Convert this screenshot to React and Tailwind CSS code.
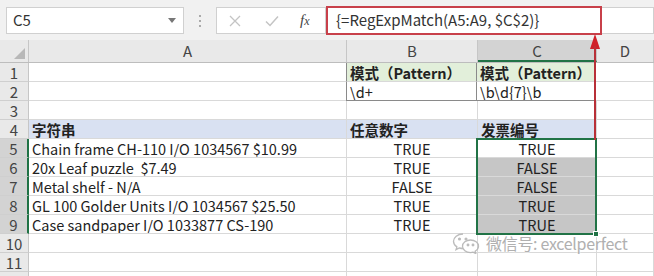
import React from 'react'

const COLS = [
  { key: 'a', label: 'A', w: 'w-[318px]' },
  { key: 'b', label: 'B', w: 'w-[131px]' },
  { key: 'c', label: 'C', w: 'w-[119px]' },
  { key: 'd', label: 'D', w: 'flex-1' },
]

const ROWS = [
  { n: 1, b: '模式（Pattern）', c: '模式（Pattern）', bg: 'bg-[#e2efda]', bold: true, boxed: true },
  { n: 2, b: '\\d+', c: '\\b\\d{7}\\b', boxed: true, bottom: true },
  { n: 3 },
  { n: 4, a: '字符串', b: '任意数字', c: '发票编号', bg: 'bg-[#d9e1f2]', bold: true },
  { n: 5, a: 'Chain frame CH-110 I/O 1034567 $10.99', b: 'TRUE', c: 'TRUE', sel: true, active: true },
  { n: 6, a: '20x Leaf puzzle  $7.49', b: 'TRUE', c: 'FALSE', sel: true },
  { n: 7, a: 'Metal shelf - N/A', b: 'FALSE', c: 'FALSE', sel: true },
  { n: 8, a: 'GL 100 Golder Units I/O 1034567 $25.50', b: 'TRUE', c: 'TRUE', sel: true },
  { n: 9, a: 'Case sandpaper I/O 1033877 CS-190', b: 'TRUE', c: 'TRUE', sel: true },
  { n: 10 },
  { n: 11 },
  { n: '' },
]

function Cell({ col, row }) {
  const text = row[col.key]
  const center = row.sel && (col.key === 'b' || col.key === 'c')
  let bg = 'bg-white'
  if (row.bg && col.key !== 'd' && !(row.n === 1 && col.key === 'a')) bg = row.bg
  if (row.sel && col.key === 'c' && !row.active) bg = 'bg-[#c6c6c6]'
  const boxed = row.boxed && (col.key === 'b' || col.key === 'c')
  return (
    <div
      className={`${col.w} h-[19px] shrink-0 border-r border-b ${
        boxed ? 'border-r-[#8a8a8a]' : 'border-r-[#d9d9d9]'
      } ${boxed && row.bottom ? 'border-b-[#8a8a8a]' : 'border-b-[#d9d9d9]'} ${
        boxed && col.key === 'b' ? 'border-l border-l-[#8a8a8a] -ml-px' : ''
      } ${bg} ${center ? 'text-center' : 'pl-[3px]'} ${
        row.bold ? 'font-bold' : ''
      } overflow-hidden whitespace-pre text-[14.5px] leading-[19px] text-[#222]`}
    >
      {text}
    </div>
  )
}

function WeChatIcon() {
  return (
    <svg width="28" height="22" viewBox="0 0 28 22" fill="none" stroke="#b5b5b5" strokeWidth="1.3">
      <path d="M11 2C5.5 2 1.5 5.3 1.5 9.3c0 2.3 1.3 4.3 3.4 5.6l-.9 2.8 3.3-1.7c1.2.3 2.4.5 3.7.5" />
      <path d="M18.5 8c-4.4 0-8 2.8-8 6.3s3.6 6.3 8 6.3c.9 0 1.8-.1 2.6-.4l2.7 1.4-.7-2.4c2-1.2 3.4-3 3.4-4.9 0-3.5-3.6-6.3-8-6.3z" />
      <circle cx="7.5" cy="7" r="0.9" fill="#b5b5b5" />
      <circle cx="14" cy="7" r="0.9" fill="#b5b5b5" />
      <circle cx="16" cy="13" r="0.8" fill="#b5b5b5" />
      <circle cx="21" cy="13" r="0.8" fill="#b5b5b5" />
    </svg>
  )
}

export default function App() {
  return (
    <div className="relative w-[654px] h-[276px] overflow-hidden bg-white font-['Noto_Sans_CJK_SC',sans-serif]">
      {/* formula bar */}
      <div className="flex h-[40px] items-start bg-[#f1f1f1] pt-[7px]">
        <div className="ml-[6px] flex h-[27px] w-[178px] items-center justify-between border border-[#d0d0d0] bg-white pl-[6px] pr-[7px]">
          <span className="text-[15px] text-[#333]">C5</span>
          <svg width="8" height="5" viewBox="0 0 8 5">
            <path d="M0 0h8L4 5z" fill="#777" />
          </svg>
        </div>
        <div className="flex h-[27px] w-[32px] flex-col items-center justify-center gap-[3px]">
          <span className="h-[2px] w-[2px] bg-[#aaa]" />
          <span className="h-[2px] w-[2px] bg-[#aaa]" />
          <span className="h-[2px] w-[2px] bg-[#aaa]" />
        </div>
        <div className="flex h-[27px] w-[110px] items-center border border-[#d0d0d0] bg-white">
          <svg className="ml-[12px]" width="12" height="12" viewBox="0 0 12 12" stroke="#c4c4c4" strokeWidth="1.3">
            <path d="M1 1l10 10M11 1L1 11" />
          </svg>
          <svg className="ml-[24px]" width="14" height="12" viewBox="0 0 14 12" fill="none" stroke="#c4c4c4" strokeWidth="1.5">
            <path d="M1 6.5l4 4L13 1.5" />
          </svg>
          <span className="ml-[21px] font-['Liberation_Serif',serif] text-[15px] italic text-[#444]">
            f<span className="text-[12px]">x</span>
          </span>
        </div>
        <div className="flex h-[27px] flex-1 items-center border border-l-0 border-[#d0d0d0] bg-white pl-[10px]">
          <span className="text-[15px] text-[#333]">{'{=RegExpMatch(A5:A9, $C$2)}'}</span>
        </div>
      </div>

      {/* column headers */}
      <div className="flex h-[23px] border-b border-[#bdbdbd] bg-[#e9e9e9]">
        <div className="flex w-[29px] shrink-0 items-end justify-end border-r border-[#c6c6c6] pb-[3px] pr-[3px]">
          <svg width="11" height="11" viewBox="0 0 11 11">
            <path d="M11 0v11H0z" fill="#b8b8b8" />
          </svg>
        </div>
        {COLS.map((c) => (
          <div
            key={c.key}
            className={`${c.w} shrink-0 border-r border-[#c6c6c6] text-center text-[15px] leading-[22px] text-[#444] ${
              c.key === 'c' ? 'bg-[#d3d3d3] border-b-2 border-b-[#217346]' : ''
            }`}
          >
            {c.label}
          </div>
        ))}
      </div>

      {/* rows */}
      {ROWS.map((r, i) => (
        <div key={i} className="flex">
          <div
            className={`h-[19px] w-[29px] shrink-0 border-b border-[#cfcfcf] text-center text-[15px] leading-[19px] text-[#444] ${
              r.sel ? 'bg-[#d3d3d3] border-r-2 border-r-[#217346]' : 'bg-[#e9e9e9] border-r border-r-[#c6c6c6]'
            }`}
          >
            {r.n}
          </div>
          {COLS.map((c) => (
            <Cell key={c.key} col={c} row={r} />
          ))}
        </div>
      ))}

      {/* selection outline */}
      <div className="absolute left-[476px] top-[138px] h-[97px] w-[121px] border-2 border-[#217346]" />
      <div className="absolute left-[593px] top-[231px] h-[6px] w-[6px] border border-white bg-[#217346]" />

      {/* annotation */}
      <div className="absolute left-[326px] top-[6px] h-[29px] w-[276px] border-2 border-[#c8404a]" />
      <svg className="absolute left-[589px] top-[34px]" width="12" height="106" viewBox="0 0 12 106">
        <path d="M6 0L11 15H1z" fill="#d0202a" />
        <path d="M6 12V106" stroke="#b83038" strokeWidth="2" />
      </svg>

      {/* watermark */}
      <div className="absolute left-[452px] top-[232px] flex items-center gap-[6px] whitespace-nowrap opacity-90">
        <WeChatIcon />
        <span className="text-[16px] leading-[18px] tracking-[-0.3px] text-[#a8a8a8] [text-shadow:0_0_2px_#fff,0_0_2px_#fff]">
          微信号: excelperfect
        </span>
      </div>
    </div>
  )
}
